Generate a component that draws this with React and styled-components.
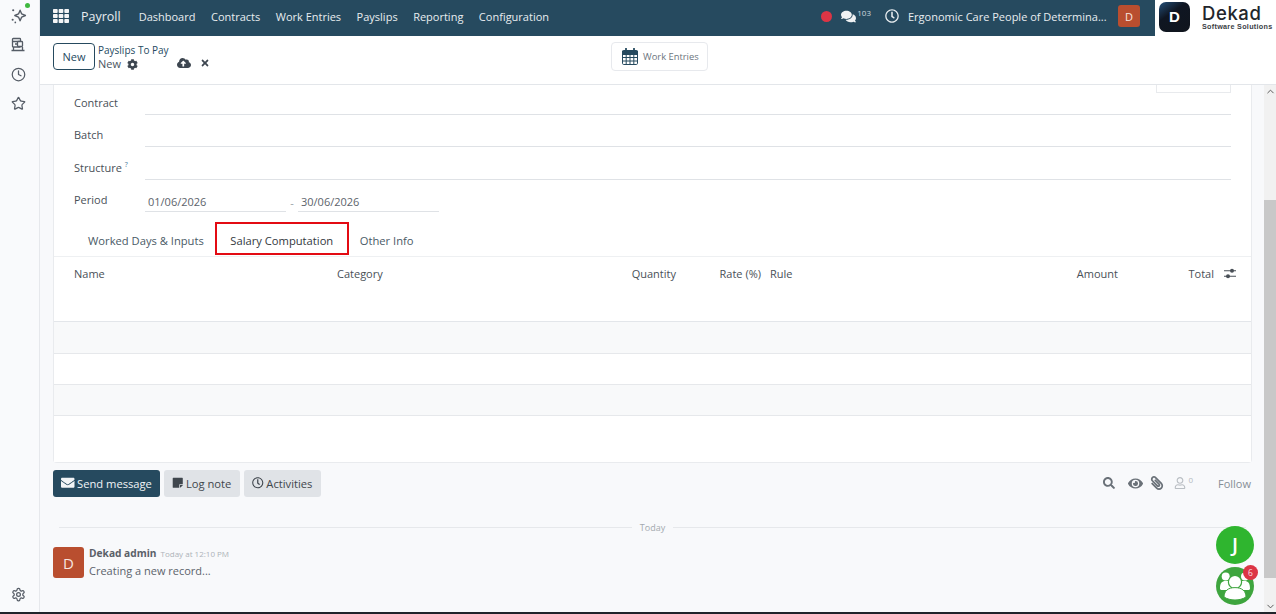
import styled, { createGlobalStyle } from 'styled-components'
import {
    FaCloudUploadAlt, FaCog, FaComments, FaEnvelope, FaEye, FaPaperclip,
    FaRegClock, FaRegUser, FaSearch, FaStickyNote, FaTh, FaTimes,
} from 'react-icons/fa'
import { LuChevronDown, LuChevronUp, LuClock, LuSettings, LuStar } from 'react-icons/lu'

const GlobalStyle = createGlobalStyle`
    html, body, #root { height: 100%; margin: 0; padding: 0; overflow: hidden; }
    body { font-family: "Open Sans", "Noto Sans", Arial, sans-serif; font-size: 11px; color: #495057; background: #f8f9fb; }
    * { box-sizing: border-box; }
`

const Page = styled.div`
    width: 1276px;
    height: 614px;
    display: flex;
    position: relative;
    overflow: hidden;
    border-bottom: 2px solid #20242a;
`

const Rail = styled.nav`
    width: 40px;
    flex: none;
    display: flex;
    flex-direction: column;
    align-items: center;
    padding: 6px 3px 0 0;
    background: #f9fafc;
    border-right: 1px solid #e6e8ec;
    color: #555c66;
    gap: 11.5px;
`

const RailIcon = styled.div`
    position: relative;
    width: 18px;
    height: 18px;
    display: flex;
    align-items: center;
    justify-content: center;
    font-size: 15px;
`

const OnlineDot = styled.i`
    position: absolute;
    top: -3px;
    right: -3px;
    width: 5px;
    height: 5px;
    border-radius: 50%;
    background: #3fb83f;
`

const RailBottom = styled(RailIcon)`
    margin-top: auto;
    margin-bottom: 9px;
`

const Main = styled.div`
    flex: 1;
    min-width: 0;
    display: flex;
    flex-direction: column;
`

const TopRow = styled.div`
    display: flex;
    height: 36px;
    flex: none;
`

const NavBar = styled.header`
    flex: 1;
    display: flex;
    align-items: center;
    padding: 0 0 4px 13px;
    background: #264a5f;
    color: #e8edf0;
    font-size: 11px;
`

const AppGrid = styled.span`
    display: flex;
    font-size: 16px;
    margin-right: 12px;
    color: #f4f5f6;
`

const AppName = styled.span`
    font-size: 12.5px;
    margin-right: 18px;
`

const NavLink = styled.a`
    margin-right: 15.5px;
    white-space: nowrap;
`

const NavRight = styled.div`
    margin-left: auto;
    display: flex;
    align-items: center;
    padding-right: 15px;
`

const RecDot = styled.i`
    width: 11px;
    height: 11px;
    border-radius: 50%;
    background: #dc3545;
    margin-right: 9px;
`

const Chat = styled.span`
    display: flex;
    align-items: center;
    font-size: 15px;
    color: #eef1f3;
`

const Sup = styled.sup`
    font-size: 8px;
    line-height: 1;
    margin: 0 0 7px 1px;
    color: #cfd8de;
`

const ClockIcon = styled.span`
    display: flex;
    font-size: 14px;
    margin: 0 9px 0 14px;
`

const CompanyName = styled.span`
    width: 201px;
    white-space: nowrap;
    margin-right: 9px;
`

const Avatar = styled.span`
    width: ${p => p.$size}px;
    height: ${p => p.$size}px;
    flex: none;
    display: flex;
    align-items: center;
    justify-content: center;
    border-radius: 3px;
    background: #b94e2f;
    color: #f7e6e0;
    font-size: ${p => p.$font}px;
`

const LogoBlock = styled.div`
    width: 121px;
    flex: none;
    display: flex;
    align-items: center;
    padding: 0 0 3px 4px;
    background: #fff;
`

const LogoMark = styled.div`
    width: 31px;
    height: 30px;
    border-radius: 7px;
    display: flex;
    align-items: center;
    justify-content: center;
    background: linear-gradient(145deg, #24507a 0%, #0f1622 38%, #10151d 100%);
    color: #fff;
    font: 700 15px "Liberation Sans", Arial, sans-serif;
`

const LogoText = styled.div`
    margin: 1px 0 0 12px;
    display: flex;
    flex-direction: column;
    color: #22262b;
`

const LogoName = styled.span`
    font: 500 18.5px/18px "Inter", sans-serif;
    letter-spacing: 0.6px;
`

const LogoSub = styled.span`
    font: 700 7.2px/9px "Liberation Sans", Arial, sans-serif;
    letter-spacing: 0.3px;
    white-space: nowrap;
    color: #3a3e44;
`

const ControlPanel = styled.div`
    height: 49px;
    flex: none;
    display: flex;
    align-items: flex-start;
    padding: 7px 0 0 13px;
    background: #fff;
    border-bottom: 1px solid #e3e6ea;
`

const NewButton = styled.button`
    width: 42px;
    height: 27px;
    padding: 0;
    border: 1px solid #264a5f;
    border-radius: 4px;
    background: #fff;
    color: #264a5f;
    font: 11px "Open Sans", sans-serif;
`

const Breadcrumb = styled.div`
    margin-left: 3px;
    width: 113px;
    color: #264a5f;
    font-size: 10px;
    line-height: 14px;
`

const CrumbRow = styled.div`
    display: flex;
    align-items: center;
    font-size: 11px;
    color: #4b5560;
`

const CrumbGear = styled.span`
    display: flex;
    font-size: 11px;
    margin-left: 6px;
    color: #3d4650;
`

const SaveIcons = styled.div`
    display: flex;
    align-items: center;
    gap: 9px;
    margin: 13px 0 0 -34px;
    font-size: 12px;
    color: #3d4650;
`

const StatButton = styled.button`
    display: flex;
    align-items: center;
    gap: 5px;
    width: 97px;
    height: 29px;
    margin: -1px 0 0 401px;
    padding: 0 0 0 10px;
    border: 1px solid #e7e9ed;
    border-radius: 4px;
    background: #fff;
    color: #6c757d;
    font: 9.4px "Open Sans", sans-serif;
`

const Scroller = styled.div`
    flex: 1;
    min-height: 0;
    display: flex;
    background: #f8f9fb;
`

const Content = styled.div`
    flex: 1;
    min-width: 0;
    padding: 0 12px 0 13px;
    overflow: hidden;
`

const Sheet = styled.section`
    height: 378px;
    background: #fff;
    border: 1px solid #e9ebee;
    border-top: none;
    border-radius: 0 0 4px 4px;
    display: flex;
    flex-direction: column;
`

const Stub = styled.div`
    width: 75px;
    height: 8px;
    flex: none;
    margin: 0 20px 0 auto;
    border: 1px solid #e8eaed;
    border-top: none;
`

const FieldRow = styled.div`
    display: flex;
    align-items: flex-end;
    height: ${p => p.$h}px;
    flex: none;
    padding: 0 20px;
`

const FieldLabel = styled.label`
    width: 71px;
    flex: none;
    padding-bottom: 5px;
    color: #495057;
    sup { font-size: 7px; color: #4a7d9c; line-height: 0; }
`

const FieldLine = styled.div`
    flex: 1;
    height: 20px;
    border-bottom: 1px solid #dfe2e6;
`

const DateLine = styled.div`
    width: 141px;
    flex: none;
    height: 20px;
    padding: 2px 0 0 3px;
    border-bottom: 1px solid #dfe2e6;
    color: #5c636b;
`

const DateDash = styled.span`
    width: 12px;
    flex: none;
    text-align: center;
    padding-bottom: 2px;
    color: #9aa0a6;
`

const Tabs = styled.div`
    height: 45px;
    flex: none;
    display: flex;
    align-items: flex-end;
    padding-left: 23px;
    border-bottom: 1px solid #eef0f2;
`

const Tab = styled.div`
    height: ${p => (p.$active ? 33 : 32)}px;
    display: flex;
    align-items: center;
    padding: ${p => (p.$active ? '3px 13.5px 0' : '0 11px')};
    margin-bottom: ${p => (p.$active ? 1 : 0)}px;
    font-size: 11.2px;
    white-space: nowrap;
    color: ${p => (p.$active ? '#33383d' : '#4a5a66')};
    border: ${p => (p.$active ? '2.5px solid #e30b13' : 'none')};
`

const Table = styled.div`
    flex: 1;
    display: flex;
    flex-direction: column;
`

const HeadRow = styled.div`
    height: 65px;
    flex: none;
    display: grid;
    grid-template-columns: 263px 280px 59px 85px 257px 100px 1fr;
    padding: 9px 15px 0 20px;
    color: #495057;
    border-bottom: 1px solid #e3e6ea;
`

const Head = styled.span`
    text-align: ${p => (p.$right ? 'right' : 'left')};
    padding-left: ${p => p.$pad || 0}px;
    white-space: nowrap;
`

const TotalCell = styled.span`
    display: flex;
    justify-content: flex-end;
    align-items: center;
    align-self: start;
    gap: 10px;
`

const BodyRow = styled.div`
    height: ${p => p.$h}px;
    flex: ${p => (p.$last ? 1 : 'none')};
    background: ${p => (p.$striped ? '#f8f9fa' : '#fff')};
    border-bottom: ${p => (p.$last ? 'none' : '1px solid #e6e8eb')};
`

const Chatter = styled.div`
    padding-top: 6px;
`

const ChatterBar = styled.div`
    display: flex;
    align-items: center;
    gap: 4px;
    height: 28px;
`

const ChatterButton = styled.button`
    height: 27px;
    display: flex;
    align-items: center;
    gap: 2.5px;
    padding: 0 ${p => (p.$primary ? 8 : 9)}px 0 8px;
    border: none;
    border-radius: 3px;
    background: ${p => (p.$primary ? '#264a5f' : '#e0e3e7')};
    color: ${p => (p.$primary ? '#f1f4f6' : '#3f464d')};
    font: 11.2px "Open Sans", sans-serif;
    svg { font-size: ${p => (p.$primary ? 13.5 : 11.5)}px; }
`

const ChatterTools = styled.div`
    margin: 0 1px 0 auto;
    display: flex;
    align-items: center;
    color: #6a7178;
    font-size: 13px;
`

const Tool = styled.span`
    display: flex;
    margin-left: ${p => p.$gap || 0}px;
    color: ${p => p.$color || 'inherit'};
    transform: ${p => (p.$flip ? 'scaleX(-1)' : 'none')};
`

const FollowerCount = styled.sup`
    font-size: 8px;
    line-height: 1;
    margin: 0 0 6px 2px;
    color: #b4b9be;
`

const Follow = styled.span`
    margin-left: 25px;
    font-size: 11px;
    color: #868e96;
`

const Separator = styled.div`
    display: flex;
    align-items: center;
    gap: 8px;
    margin: 23px 6px 0;
    height: 14px;
    font-size: 9px;
    color: #a3a9af;
    &::before, &::after {
        content: "";
        flex: 1;
        height: 1px;
        background: #e6e8eb;
    }
`

const Message = styled.div`
    display: flex;
    gap: 5px;
    margin-top: 13px;
`

const Author = styled.div`
    display: flex;
    align-items: baseline;
    gap: 4px;
    line-height: 13px;
    font-size: 10.2px;
    font-weight: 700;
    color: #5a6068;
`

const Stamp = styled.span`
    font-size: 8px;
    font-weight: 400;
    color: #adb3b9;
`

const MessageText = styled.div`
    margin-top: 2px;
    line-height: 18px;
    color: #5c636b;
`

const ScrollBar = styled.div`
    width: 12px;
    flex: none;
    display: flex;
    flex-direction: column;
    background: #f1f1f1;
    color: #505050;
    font-size: 11px;
    align-items: center;
`

const ScrollThumb = styled.div`
    width: 100%;
    height: 378px;
    margin-top: 103px;
    background: #c8c8c8;
`

const ScrollArrow = styled.span`
    display: flex;
    height: 12px;
    flex: none;
    align-items: center;
    margin-top: ${p => (p.$end ? 'auto' : 0)};
`

const FloatButton = styled.div`
    position: absolute;
    left: 1216px;
    top: ${p => p.$top}px;
    width: 38px;
    height: 38px;
    padding-bottom: 1px;
    border-radius: 50%;
    background: ${p => p.$bg};
    color: #fff;
    display: flex;
    align-items: center;
    justify-content: center;
    font-size: 20px;
    font-weight: 600;
`

const Badge = styled.span`
    position: absolute;
    top: -2px;
    right: -4px;
    width: 15px;
    height: 15px;
    border-radius: 50%;
    background: #dc3545;
    color: #fbdfe2;
    font-size: 8.5px;
    font-weight: 400;
    line-height: 15px;
    text-align: center;
`

function SparkIcon() {
    return (
        <svg width="17" height="17" viewBox="0 0 16 16" fill="none" stroke="currentColor" strokeWidth="1.3">
            <path d="M9.5 3 11 6.5 14.5 8 11 9.5 9.5 13 8 9.5 4.5 8 8 6.5Z" strokeLinejoin="round" />
            <circle cx="3" cy="3" r="1" fill="currentColor" stroke="none" />
            <circle cx="2.5" cy="12" r="1" fill="currentColor" stroke="none" />
            <circle cx="5" cy="14.5" r=".8" fill="currentColor" stroke="none" />
        </svg>
    )
}

function DeskIcon() {
    return (
        <svg width="16" height="16" viewBox="0 0 16 16" fill="none" stroke="currentColor" strokeWidth="1.3">
            <rect x="2.5" y="1.5" width="8" height="8.5" rx=".8" />
            <path d="M2.5 4.5h8M5 7h3" />
            <rect x="7.5" y="4.5" width="5" height="5" rx=".8" fill="#f9fafc" />
            <path d="M1.5 13.5h13M3.5 10v3.5M12.5 10v3.5" />
        </svg>
    )
}

function CalendarIcon() {
    return (
        <svg width="16" height="17" viewBox="0 0 16 17" fill="none" stroke="#264a5f" strokeWidth="1">
            <rect x=".5" y="2.5" width="15" height="14" rx="1.2" />
            <path d="M.5 3h15v3.5H.5z" fill="#264a5f" />
            <path d="M.5 9.5h15M.5 13h15M4.2 6v10.5M8 6v10.5M11.8 6v10.5" />
            <path d="M4 .5v3.5M12 .5v3.5" strokeWidth="1.8" strokeLinecap="round" />
        </svg>
    )
}

function AdjustIcon() {
    return (
        <svg width="12" height="11" viewBox="0 0 12 11" fill="currentColor">
            <path d="M0 2.2h12v1H0zM0 7.8h12v1H0z" />
            <circle cx="8" cy="2.7" r="2" />
            <circle cx="4" cy="8.3" r="2" />
        </svg>
    )
}

function GroupIcon() {
    return (
        <svg width="32" height="32" viewBox="0 0 32 32" fill="#fff">
            <circle cx="6.7" cy="6.5" r="4" />
            <circle cx="26" cy="6.5" r="4" />
            <path d="M1 19c-.2-6 2-8 5.5-8H12v9H2zM31 19c.2-6-2-8-5.5-8H20v9h10z" />
            <circle cx="16" cy="12" r="6.6" stroke="#3ea53e" strokeWidth="1.2" />
            <path d="M5 27c0-6 4-9.4 11-9.4S27 21 27 27c-3 2-7 3-11 3s-8-1-11-3z" stroke="#3ea53e" strokeWidth="1" />
        </svg>
    )
}

const navLinks = ['Dashboard', 'Contracts', 'Work Entries', 'Payslips', 'Reporting', 'Configuration']
const columns = [
    { name: 'Name' },
    { name: 'Category' },
    { name: 'Quantity', right: true },
    { name: 'Rate (%)', right: true },
    { name: 'Rule', pad: 9 },
    { name: 'Amount', right: true },
]

export default function App() {
    return (
        <Page>
            <GlobalStyle />
            <Rail>
                <RailIcon><SparkIcon /><OnlineDot /></RailIcon>
                <RailIcon><DeskIcon /></RailIcon>
                <RailIcon><LuClock /></RailIcon>
                <RailIcon><LuStar /></RailIcon>
                <RailBottom><LuSettings /></RailBottom>
            </Rail>
            <Main>
                <TopRow>
                    <NavBar>
                        <AppGrid><FaTh /></AppGrid>
                        <AppName>Payroll</AppName>
                        {navLinks.map(link => <NavLink key={link}>{link}</NavLink>)}
                        <NavRight>
                            <RecDot />
                            <Chat><FaComments /><Sup>103</Sup></Chat>
                            <ClockIcon><FaRegClock /></ClockIcon>
                            <CompanyName>Ergonomic Care People of Determina...</CompanyName>
                            <Avatar $size={22} $font={11}>D</Avatar>
                        </NavRight>
                    </NavBar>
                    <LogoBlock>
                        <LogoMark>D</LogoMark>
                        <LogoText>
                            <LogoName>Dekad</LogoName>
                            <LogoSub>Software Solutions</LogoSub>
                        </LogoText>
                    </LogoBlock>
                </TopRow>
                <ControlPanel>
                    <NewButton>New</NewButton>
                    <Breadcrumb>
                        Payslips To Pay
                        <CrumbRow>New<CrumbGear><FaCog /></CrumbGear></CrumbRow>
                    </Breadcrumb>
                    <SaveIcons><FaCloudUploadAlt size={14} /><FaTimes size={10} /></SaveIcons>
                    <StatButton><CalendarIcon />Work Entries</StatButton>
                </ControlPanel>
                <Scroller>
                    <Content>
                        <Sheet>
                            <Stub />
                            <FieldRow $h={22}><FieldLabel>Contract</FieldLabel><FieldLine /></FieldRow>
                            <FieldRow $h={32}><FieldLabel>Batch</FieldLabel><FieldLine /></FieldRow>
                            <FieldRow $h={33}><FieldLabel>Structure <sup>?</sup></FieldLabel><FieldLine /></FieldRow>
                            <FieldRow $h={32}>
                                <FieldLabel>Period</FieldLabel>
                                <DateLine>01/06/2026</DateLine>
                                <DateDash>-</DateDash>
                                <DateLine>30/06/2026</DateLine>
                            </FieldRow>
                            <Tabs>
                                <Tab>Worked Days &amp; Inputs</Tab>
                                <Tab $active>Salary Computation</Tab>
                                <Tab>Other Info</Tab>
                            </Tabs>
                            <Table>
                                <HeadRow>
                                    {columns.map(col => <Head key={col.name} $right={col.right} $pad={col.pad}>{col.name}</Head>)}
                                    <TotalCell>Total<AdjustIcon /></TotalCell>
                                </HeadRow>
                                <BodyRow $h={32} $striped />
                                <BodyRow $h={31} />
                                <BodyRow $h={31} $striped />
                                <BodyRow $last />
                            </Table>
                        </Sheet>
                        <Chatter>
                            <ChatterBar>
                                <ChatterButton $primary><FaEnvelope />Send message</ChatterButton>
                                <ChatterButton><FaStickyNote />Log note</ChatterButton>
                                <ChatterButton><FaRegClock />Activities</ChatterButton>
                                <ChatterTools>
                                    <Tool><FaSearch size={12} /></Tool>
                                    <Tool $gap={13}><FaEye size={15} /></Tool>
                                    <Tool $gap={7} $flip><FaPaperclip size={14} /></Tool>
                                    <Tool $gap={10} $color="#b9bec3"><FaRegUser size={12} /></Tool>
                                    <FollowerCount>0</FollowerCount>
                                    <Follow>Follow</Follow>
                                </ChatterTools>
                            </ChatterBar>
                            <Separator>Today</Separator>
                            <Message>
                                <Avatar $size={31} $font={15}>D</Avatar>
                                <div>
                                    <Author>Dekad admin <Stamp>Today at 12:10 PM</Stamp></Author>
                                    <MessageText>Creating a new record...</MessageText>
                                </div>
                            </Message>
                        </Chatter>
                    </Content>
                    <ScrollBar>
                        <ScrollArrow><LuChevronUp /></ScrollArrow>
                        <ScrollThumb />
                        <ScrollArrow $end><LuChevronDown /></ScrollArrow>
                    </ScrollBar>
                </Scroller>
            </Main>
            <FloatButton $top={526} $bg="#2fb52f">J</FloatButton>
            <FloatButton $top={567} $bg="#3ea53e"><GroupIcon /><Badge>6</Badge></FloatButton>
        </Page>
    )
}
